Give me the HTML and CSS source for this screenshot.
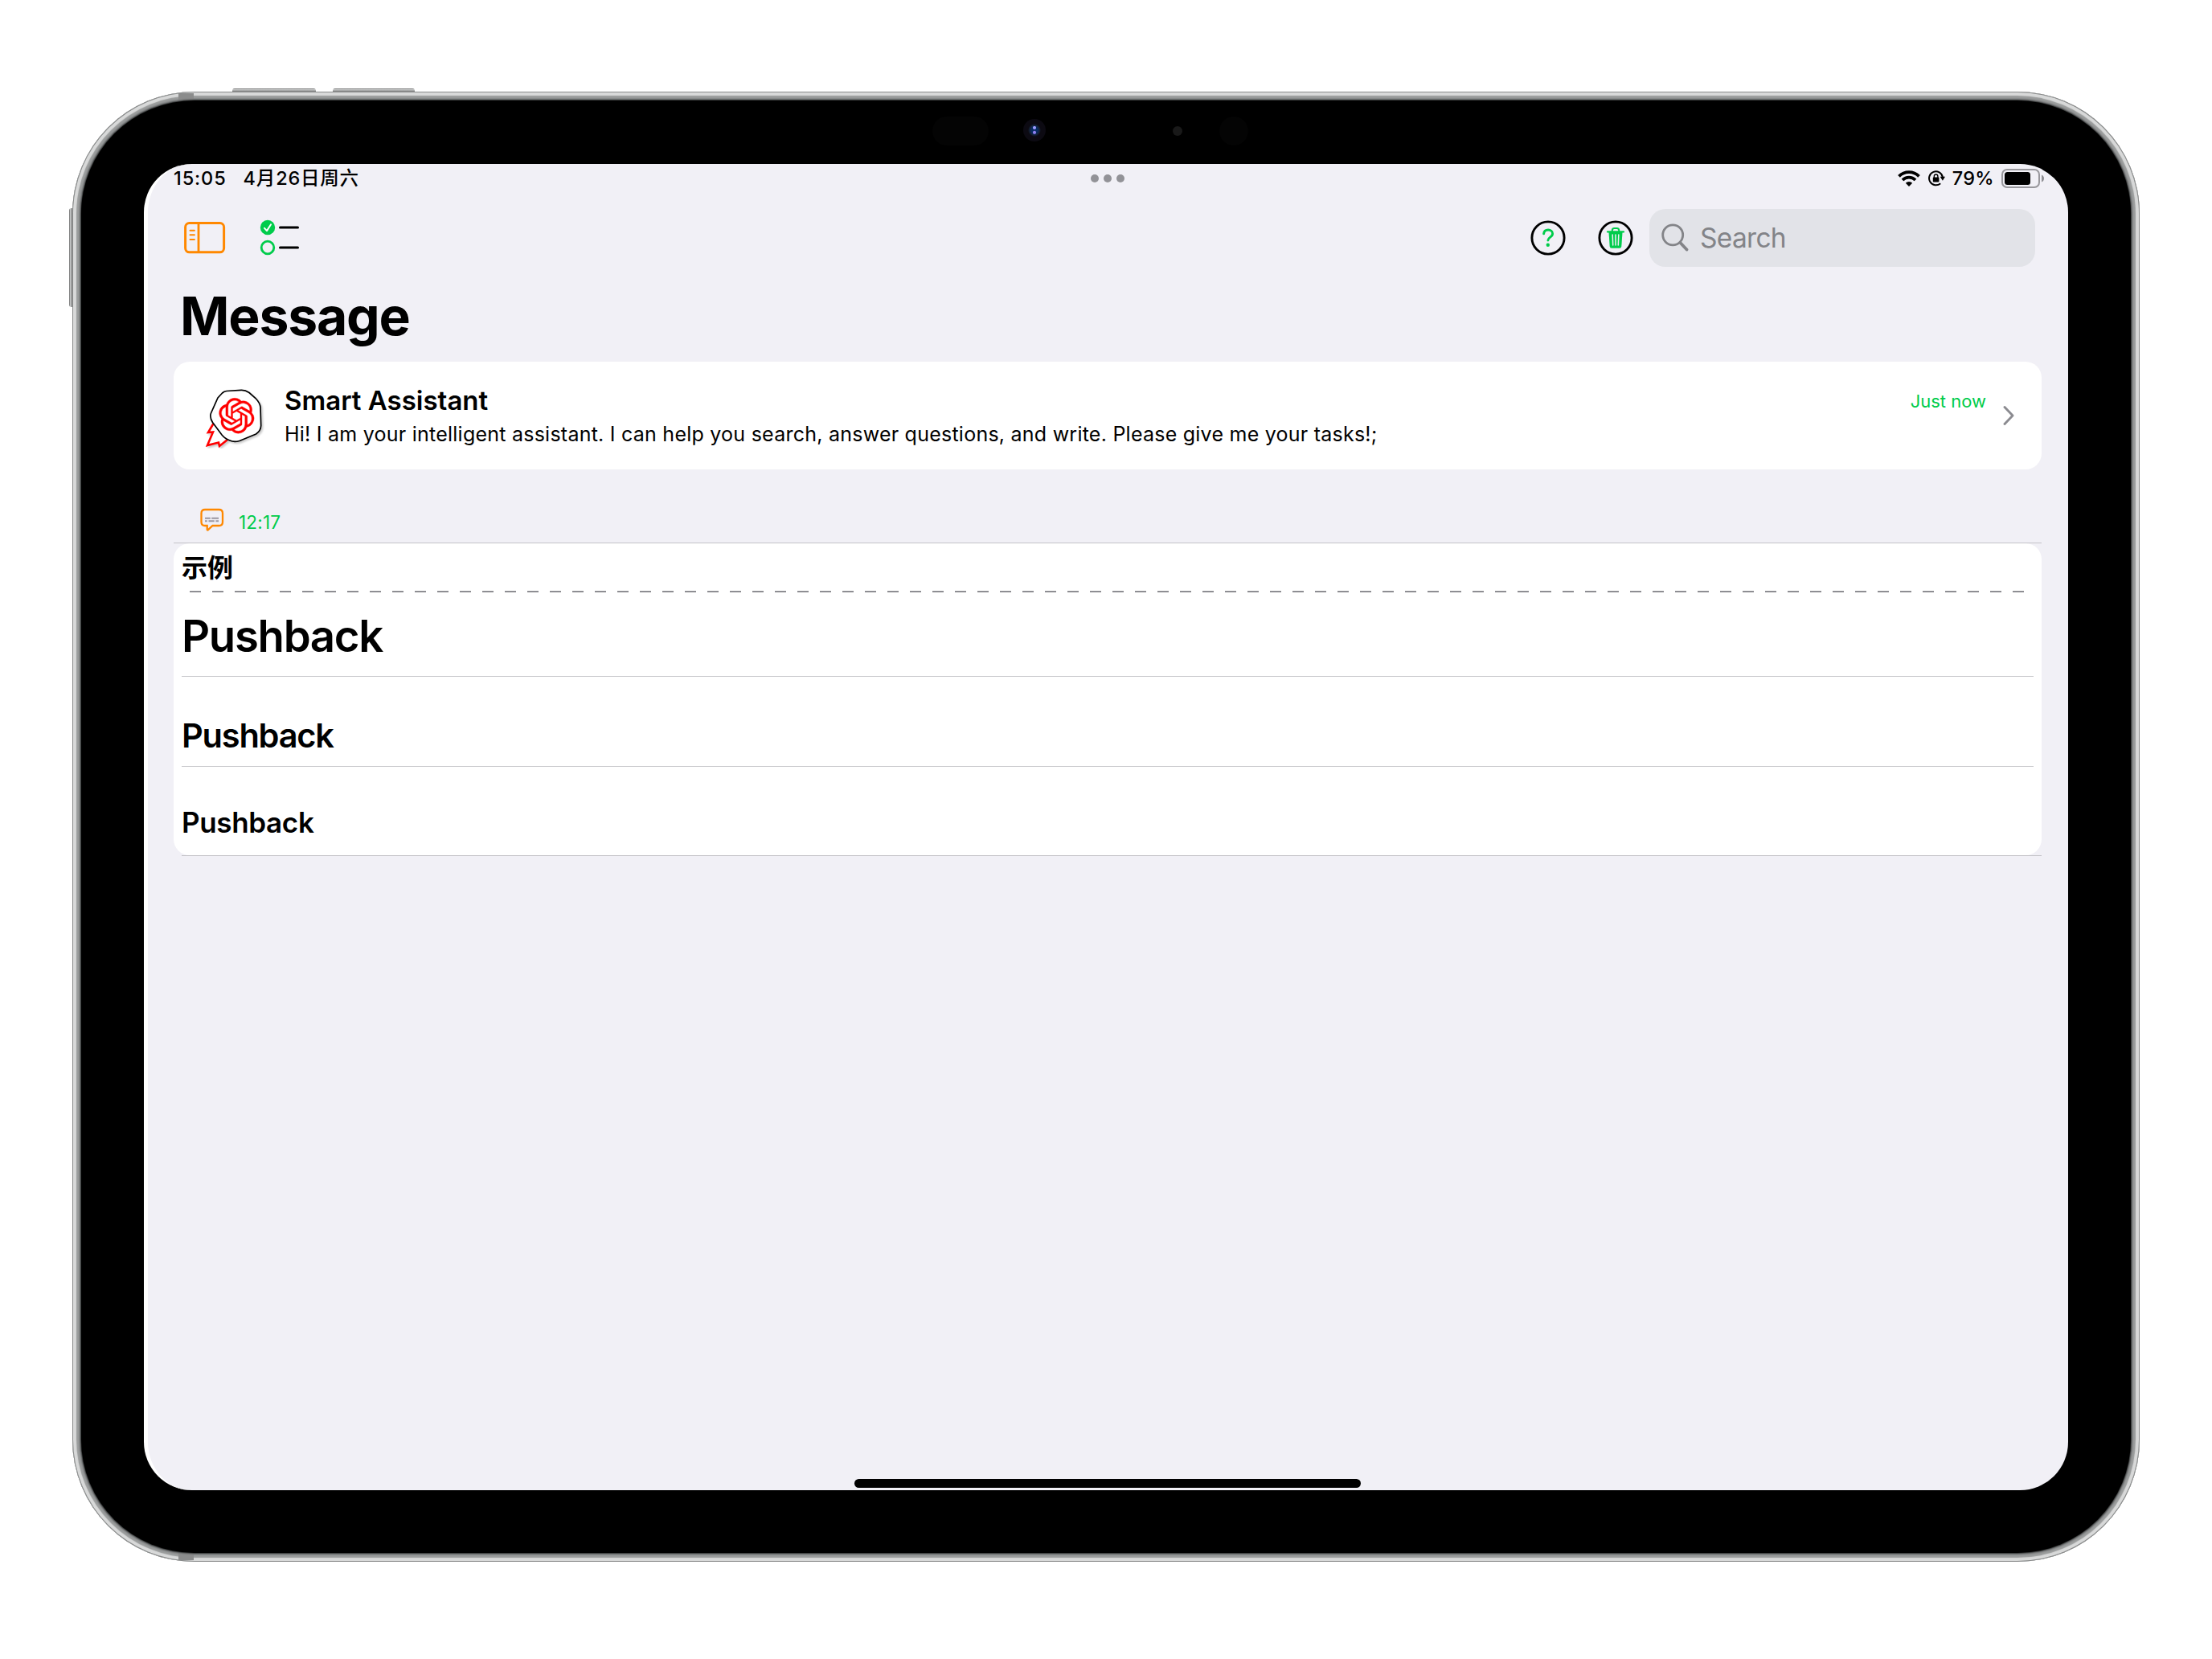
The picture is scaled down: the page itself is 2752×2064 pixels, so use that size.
FILE: index.html
```html
<!DOCTYPE html>
<html lang="en">
<head>
<meta charset="utf-8">
<title>Message</title>
<link rel="stylesheet" href="styles.css">
</head>
<body>
<div class="device">
  <span class="key key-up"></span>
  <span class="key key-down"></span>
  <span class="key key-power"></span>
  <span class="antenna antenna-top"></span>
  <span class="antenna antenna-bottom"></span>
  <div class="bezel">
    <span class="sensor sensor-pill"></span>
    <span class="sensor camera"></span>
    <span class="sensor mic"></span>
    <span class="sensor sensor-round"></span>
    <div class="screen">
      <header class="status">
        <div class="status-left"><span class="clock">15:05</span><span class="date">4月26日周六</span></div>
        <div class="dots"><i></i><i></i><i></i></div>
        <div class="status-right">
          <svg class="wifi" width="28" height="20" viewBox="0 0 28 20"><g fill="none" stroke="#000" stroke-width="3.8"><path d="M1.500 7.300a17.600 17.600 0 0 1 25 0"/><path d="M6 12a11.400 11.400 0 0 1 16 0"/></g><path d="M14 20l-4.200-4.300a6 6 0 0 1 8.400 0z"/></svg>
          <svg class="lock" width="21" height="20" viewBox="0 0 21 20"><path d="M15.200 16.200A8.500 8.500 0 1 1 17.900 8.200" fill="none" stroke="#000" stroke-width="2"/><path d="M14.600 7.800h6.400l-3.100 5z"/><rect x="5.800" y="8.600" width="7.600" height="6" rx="1"/><path d="M7.300 9V7.300a2.300 2.300 0 0 1 4.600 0V9" fill="none" stroke="#000" stroke-width="1.400"/></svg>
          <span class="percent">79%</span>
          <svg class="battery" width="54" height="24" viewBox="0 0 54 24"><rect x="1" y="1" width="46" height="22" rx="6" fill="none" stroke="#98979c" stroke-width="2"/><rect x="4" y="4" width="32" height="16" rx="3.500"/><path d="M50 7.500q3 1.500 3 4.500t-3 4.500z" fill="#8e8e93"/></svg>
        </div>
      </header>
      <nav class="toolbar">
        <svg class="sidebar-icon" width="52" height="40" viewBox="0 0 52 40" fill="none" stroke="#ff8800"><rect x="1.600" y="1.600" width="48" height="36.200" rx="5" stroke-width="3"/><path d="M18 2v36" stroke-width="2.800"/><path d="M7.500 10.700h5.400M7.500 16.300h5.400M7.500 21.900h5.400" stroke-width="2" stroke-linecap="round"/></svg>
        <svg class="checklist-icon" width="50" height="46" viewBox="0 0 50 46"><circle cx="10" cy="10" r="9.200" fill="#00cc4b"/><path d="M6 10.800l3 3.300 5-7.800" fill="none" stroke="#fff" stroke-width="2" stroke-linecap="round" stroke-linejoin="round"/><circle cx="10" cy="35" r="7.800" fill="none" stroke="#00cc4b" stroke-width="2.800"/><path d="M25.500 10h22M25.500 35h22" stroke="#000" stroke-width="3" stroke-linecap="round"/></svg>
        <svg class="help-icon" width="44" height="44" viewBox="0 0 44 44" fill="none"><circle cx="22" cy="22" r="20.100" stroke="#000" stroke-width="2.900"/><path d="M16.600 16.800c.3-3.200 2.400-4.800 5.500-4.800 3.200 0 5.500 1.900 5.500 4.700 0 4.500-5.700 4.300-5.700 8.300" stroke="#00cc4b" stroke-width="2.900" stroke-linecap="round"/><circle cx="21.800" cy="30.700" r="2.200" fill="#00cc4b"/></svg>
        <svg class="trash-icon" width="44" height="44" viewBox="0 0 44 44" fill="none"><circle cx="22" cy="22" r="20.100" stroke="#000" stroke-width="2.900"/><path d="M17.800 14v-1.500q0-2.500 2.500-2.500h3.400q2.500 0 2.500 2.500V14" stroke="#00cc4b" stroke-width="2"/><path d="M12 14.400h20" stroke="#00cc4b" stroke-width="2.200" stroke-linecap="round"/><path d="M13.500 15h17l-1.200 17.500q-.2 2.200-2.300 2.200H17q-2.100 0-2.300-2.200z" fill="#00cc4b"/><path d="M18.200 18l.5 13M22 18v13M25.800 18l-.5 13" stroke="#f1f0f6" stroke-width="1.500" stroke-linecap="round"/></svg>
        <div class="search"><svg width="34" height="36" viewBox="0 0 34 36" fill="none" stroke="#838488" stroke-linecap="round"><circle cx="14.200" cy="14.300" r="12.500" stroke-width="2.800"/><path d="M23.500 24l8 8.500" stroke-width="3.800"/></svg><span>Search</span></div>
      </nav>
      <h1 class="title">Message</h1>
      <section class="assistant">
        <svg class="avatar" width="76" height="76" viewBox="0 0 76 76">
          <g class="avatar-art"><path d="M11.500 45L5 56l6-.6L4 72l14-3.500 1 4.500 10-8" fill="#fff" stroke="#f00" stroke-width="2.600"/><path d="M22.500 7Q25 4.800 28 4.500l18-1.200Q51 3 56 6.500l8 7q5.500 6 6 11l.7 23q-.2 6.500-6.200 10.500L44 66.500q-7 2-12-.5Q26 64 22 59L10.500 43.500q-4-6.500-2-11.500L17 13z" fill="#fff" stroke="#000" stroke-width="1.700"/></g>
          <path transform="translate(18.300 13.300) scale(1.830)" fill="#f00" stroke="#f00" stroke-width=".2" d="M22.2819 9.8211a5.9847 5.9847 0 0 0-.5157-4.9108 6.0462 6.0462 0 0 0-6.5098-2.9A6.0651 6.0651 0 0 0 4.9807 4.1818a5.9847 5.9847 0 0 0-3.9977 2.9 6.0462 6.0462 0 0 0 .7427 7.0966 5.98 5.98 0 0 0 .511 4.9107 6.051 6.051 0 0 0 6.5146 2.9001A5.9847 5.9847 0 0 0 13.2599 24a6.0557 6.0557 0 0 0 5.7718-4.2058 5.9894 5.9894 0 0 0 3.9977-2.9001 6.0557 6.0557 0 0 0-.7475-7.0729zm-9.022 12.6081a4.4755 4.4755 0 0 1-2.8764-1.0408l.1419-.0804 4.7783-2.7582a.7948.7948 0 0 0 .3927-.6813v-6.7369l2.02 1.1686a.071.071 0 0 1 .038.052v5.5826a4.504 4.504 0 0 1-4.4945 4.4944zm-9.6607-4.1254a4.4708 4.4708 0 0 1-.5346-3.0137l.142.0852 4.783 2.7582a.7712.7712 0 0 0 .7806 0l5.8428-3.3685v2.3324a.0804.0804 0 0 1-.0332.0615L9.74 19.9502a4.4992 4.4992 0 0 1-6.1408-1.6464zM2.3408 7.8956a4.485 4.485 0 0 1 2.3655-1.9728V11.6a.7664.7664 0 0 0 .3879.6765l5.8144 3.3543-2.0201 1.1685a.0757.0757 0 0 1-.071 0l-4.8303-2.7865A4.504 4.504 0 0 1 2.3408 7.872zm16.5963 3.8558L13.1038 8.364 15.1192 7.2a.0757.0757 0 0 1 .071 0l4.8303 2.7913a4.4944 4.4944 0 0 1-.6765 8.1042v-5.6772a.79.79 0 0 0-.407-.667zm2.0107-3.0231l-.142-.0852-4.7735-2.7818a.7759.7759 0 0 0-.7854 0L9.409 9.2297V6.8974a.0662.0662 0 0 1 .0284-.0615l4.8303-2.7866a4.4992 4.4992 0 0 1 6.6802 4.66zM8.3065 12.863l-2.02-1.1638a.0804.0804 0 0 1-.038-.0567V6.0742a4.4992 4.4992 0 0 1 7.3757-3.4537l-.142.0805L8.704 5.459a.7948.7948 0 0 0-.3927.6813zm1.0976-2.3654l2.602-1.4998 2.6069 1.4998v2.9994l-2.5974 1.4997-2.6067-1.4997Z"/>
        </svg>
        <div class="assistant-text">
          <h2 class="assistant-name">Smart Assistant</h2>
          <p class="assistant-line">Hi! I am your intelligent assistant. I can help you search, answer questions, and write. Please give me your tasks!;</p>
        </div>
        <span class="when">Just now</span>
        <svg class="chevron" width="14" height="26" viewBox="0 0 14 26"><path d="M2 2.500l10 10.500L2 23.500" fill="none" stroke="#8b8b90" stroke-width="2.900" stroke-linecap="round" stroke-linejoin="round"/></svg>
      </section>
      <div class="group-head">
        <svg width="30" height="30" viewBox="0 0 30 30" fill="none"><path d="M6 2h17.500Q28 2 28 6.500v11q0 4.500-4.500 4.500H15.500l-5.500 5.200q-1.300.8-1.300-.6V22H6Q1.500 22 1.500 17.500v-11Q1.500 2 6 2z" stroke="#ff8800" stroke-width="2.300"/><path d="M6 12.700h6.800m1.400 0H23M6 16.300h2.800m1.700 0h7.200m1.700 0H23" stroke="#9a96a0" stroke-width="1.900"/></svg>
        <span>12:17</span>
      </div>
      <section class="messages">
        <h3 class="sample">示例</h3>
        <div class="dashes"></div>
        <div class="row row-1">Pushback</div>
        <div class="row row-2">Pushback</div>
        <div class="row row-3">Pushback</div>
      </section>
      <div class="rule"></div>
      <div class="home"></div>
    </div>
  </div>
</div>
</body>
</html>
```
FILE: styles.css
```css
* { box-sizing: border-box; margin: 0; padding: 0; }
body { width: 2752px; height: 2064px; background: #fff; padding: 114px 90px 0; overflow: hidden; font-family: Inter, "Noto Sans CJK SC", sans-serif; color: #000; white-space: nowrap; }
svg { display: block; flex: none; }

.device { position: relative; width: 2572px; height: 1829px; border-radius: 152px; padding: 11px; background: #8b8d8e; box-shadow: inset 0 0 0 1px #888a8a, inset 0 0 1px 5px #d8d9d9, inset 0 0 2px 8px #9b9d9d; }
.bezel { position: relative; height: 1807px; border-radius: 141px; background: #000; padding: 79px 78px; box-shadow: 0 0 2px 1px #242626; }
.screen { position: relative; width: 2394px; height: 1650px; border-radius: 60px; background: #f1f0f6; border-left: 5px solid #fff; padding: 0 33px 0 32px; overflow: hidden; display: flex; flex-direction: column; }

.key { position: absolute; background: linear-gradient(#666, #c8caca 40%, #777); border-radius: 3px 3px 0 0; }
.key-up { left: 199px; top: -4px; width: 104px; height: 4px; }
.key-down { left: 324px; top: -4px; width: 102px; height: 4px; }
.key-power { left: -4px; top: 145px; width: 4px; height: 123px; border-radius: 3px 0 0 3px; background: linear-gradient(90deg, #666, #c8caca 40%, #777); }
.antenna { position: absolute; left: 132px; width: 19px; height: 9px; background: #8b8c8c; }
.antenna-top { top: 2px; }
.antenna-bottom { bottom: 2px; }
.sensor { position: absolute; border-radius: 50px; background: #040404; }
.sensor-pill { left: 1059px; top: 20px; width: 70px; height: 36px; }
.camera { left: 1172px; top: 23px; width: 28px; height: 28px; background: radial-gradient(circle at 50% 39%, #9c9cff 0 1.5px, transparent 2.5px), radial-gradient(circle at 50% 60%, #9080f0 0 1.5px, transparent 2.5px), radial-gradient(circle, #082a62 0 4px, #142338 6px, #0c0a12 8px); }
.mic { left: 1358px; top: 32px; width: 12px; height: 12px; background: #191919; }
.sensor-round { left: 1416px; top: 20px; width: 36px; height: 36px; }

.status { height: 36px; display: grid; grid-template-columns: 1fr auto 1fr; align-items: center; font-size: 23.5px; line-height: 36px; font-weight: 500; }
.status-left { display: flex; gap: 21px; }
.clock { letter-spacing: .9px; }
.date { letter-spacing: .8px; }
.dots { display: flex; gap: 6px; }
.dots i { width: 10px; height: 10px; border-radius: 50%; background: #929297; }
.status-right { display: flex; align-items: center; justify-content: flex-end; margin-right: -4px; }
.lock { margin: 0 9px 0 10px; }
.percent { letter-spacing: .3px; }
.battery { margin-left: 9px; }

.toolbar { height: 112px; display: flex; align-items: center; padding: 0 8px 0 13px; }
.checklist-icon { margin-left: 42px; }
.help-icon { margin-left: auto; }
.trash-icon { margin-left: 40px; }
.search { margin-left: 20px; width: 480px; height: 72px; border-radius: 20px; background: #e2e3e8; color: #838488; display: flex; align-items: center; padding-left: 15px; gap: 14px; font-size: 33.5px; letter-spacing: -.7px; }
.title { font-size: 66px; line-height: 80px; font-weight: 700; margin: 1px 0 17px 8px; letter-spacing: -1.2px; }

.assistant { height: 134px; background: #fff; border-radius: 20px; display: flex; padding: 0 34px 0 38px; align-items: flex-start; }
.avatar { margin-top: 32px; }
.avatar-art { filter: drop-shadow(2px 2px 1px #0003); }
.assistant-text { margin: 27px auto 0 24px; }
.assistant-name { font-size: 33px; line-height: 42px; font-weight: 600; }
.assistant-line { font-size: 25px; line-height: 42px; letter-spacing: .24px; }
.when { font-size: 22px; line-height: 42px; margin: 28px 21px 0 0; color: #00cc4b; }
.chevron { margin-top: 54px; }

.group-head { height: 92px; display: flex; align-items: flex-start; gap: 18px; padding: 48px 0 0 33px; color: #00cc4b; font-size: 22.5px; line-height: 35px; letter-spacing: .2px; border-bottom: 1px solid #c4c3c8; }
.messages { height: 388px; background: #fff; border-radius: 20px; padding: 6px 10px 0; }
.sample { font-size: 32px; line-height: 49px; height: 53px; font-weight: 700; }
.dashes { height: 2px; margin: 0 12px 0 10px; background: repeating-linear-gradient(90deg, #8e8e93 0 14px, transparent 14px 28px); }
.row { font-weight: 600; border-bottom: 1px solid #c9c9cc; }
.row-1 { height: 105px; font-size: 54.5px; line-height: 109px; letter-spacing: -1.3px; }
.row-2 { height: 112px; font-size: 41.5px; line-height: 147px; letter-spacing: -1.2px; }
.row-3 { height: 110px; font-size: 35px; line-height: 139px; letter-spacing: -.35px; border: 0; }
.rule { height: 1px; background: #c4c3c8; margin-left: 10px; }
.home { width: 630px; height: 11px; border-radius: 6px; background: #000; margin: auto auto 3px; }
```
